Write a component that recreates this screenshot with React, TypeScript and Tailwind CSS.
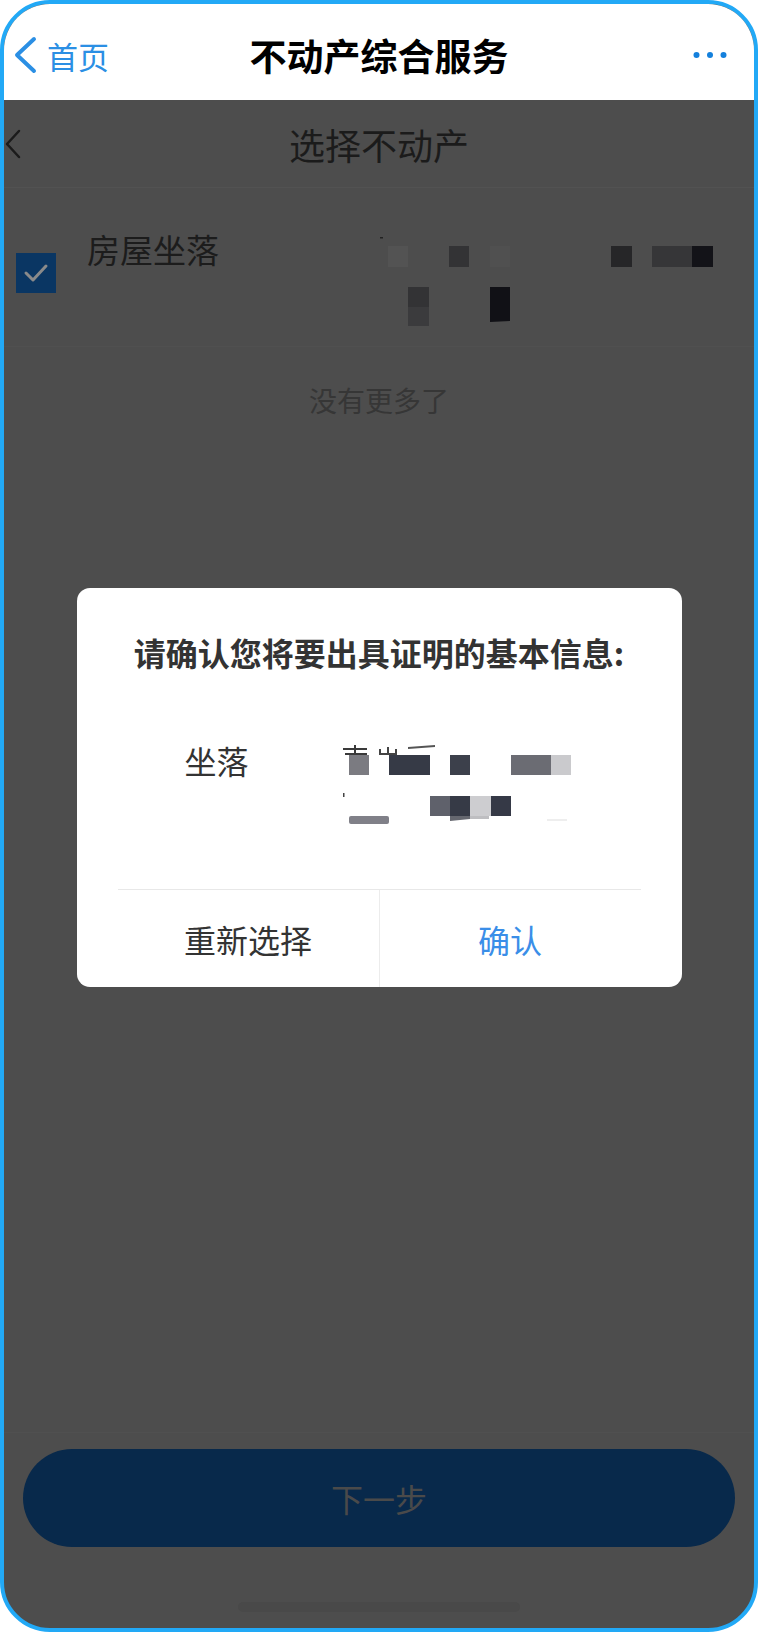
import React from "react";

const FONT = { fontFamily: '"Noto Sans CJK SC", "Noto Sans", sans-serif' };

function RowMosaic() {
  return (
    <svg width="336" height="92" viewBox="0 0 336 92" className="shrink-0">
      <rect x="0" y="2" width="3" height="1.5" fill="#222" />
      <rect x="8" y="11" width="20" height="21" fill="#535353" />
      <rect x="69" y="11" width="20" height="21" fill="#333335" />
      <rect x="110" y="11" width="20" height="21" fill="#505050" />
      <rect x="231" y="11" width="21" height="21" fill="#262628" />
      <rect x="272" y="11" width="40" height="21" fill="#363638" />
      <rect x="312" y="11" width="21" height="21" fill="#131318" />
      <rect x="28" y="52" width="21" height="20" fill="#333335" />
      <rect x="28" y="72" width="21" height="19" fill="#3b3b3d" />
      <path d="M110 52 H130 V86 L110 87 Z" fill="#111116" />
    </svg>
  );
}

function ValueMosaic() {
  return (
    <svg width="230" height="100" viewBox="0 0 230 100" className="shrink-0">
      <rect x="0" y="13" width="24" height="2" fill="#3a3a3a" />
      <rect x="2" y="18" width="22" height="2" fill="#3a3a3a" />
      <rect x="11" y="10" width="2" height="10" fill="#3a3a3a" />
      <rect x="36" y="14" width="2" height="6" fill="#444" />
      <rect x="44" y="12" width="2" height="8" fill="#444" />
      <rect x="52" y="14" width="2" height="6" fill="#444" />
      <rect x="36" y="18" width="18" height="2" fill="#444" />
      <path d="M65 12 L92 10 L92 12 L65 14 Z" fill="#555" />
      <rect x="6" y="20" width="20" height="20" fill="#7b7b81" />
      <rect x="46" y="20" width="41" height="20" fill="#363a46" />
      <rect x="107" y="20" width="20" height="20" fill="#3c404b" />
      <rect x="168" y="20" width="40" height="20" fill="#6b6c73" />
      <rect x="208" y="20" width="20" height="20" fill="#cacacd" />
      <rect x="0" y="58" width="1.5" height="4" fill="#444" />
      <rect x="87" y="61" width="20" height="20" fill="#5f616b" />
      <rect x="107" y="61" width="20" height="20" fill="#363a46" />
      <rect x="127" y="61" width="21" height="20" fill="#cdcdd0" />
      <rect x="148" y="61" width="20" height="20" fill="#353946" />
      <rect x="6" y="81" width="40" height="8" rx="2" fill="#808088" />
      <path d="M107 81 H127 V84 L107 86 Z" fill="#65676f" />
      <rect x="127" y="81" width="19" height="3" fill="#bebec1" />
      <rect x="204" y="84" width="20" height="2" fill="#eeeeee" />
    </svg>
  );
}

export default function App() {
  return (
    <div className="w-[758px] h-[1632px] bg-white" style={FONT}>
      <div className="relative h-full rounded-[50px] border-4 border-[#22a9f6] overflow-hidden flex flex-col bg-[#4d4d4d]">
        {/* Top nav */}
        <div className="h-[96px] shrink-0 bg-white grid grid-cols-[1fr_auto_1fr] items-center pt-[6px] px-[8px]">
          <div className="flex items-center">
            <svg width="26" height="38" viewBox="0 0 26 38">
              <path d="M22 3 L5 19 L22 35" fill="none" stroke="#2b8fe4" strokeWidth="4" strokeLinecap="round" strokeLinejoin="round" />
            </svg>
            <span className="ml-[9px] text-[31px] leading-none text-[#2b8fe4]">首页</span>
          </div>
          <div className="text-[37px] leading-none font-bold text-black">不动产综合服务</div>
          <div className="flex justify-end pr-[19px]">
            <svg width="34" height="8" viewBox="0 0 34 8">
              <circle cx="3.5" cy="4" r="3" fill="#1480dc" />
              <circle cx="17" cy="4" r="3" fill="#1480dc" />
              <circle cx="30.5" cy="4" r="3" fill="#1480dc" />
            </svg>
          </div>
        </div>

        {/* Sub header */}
        <div className="h-[88px] shrink-0 grid grid-cols-[1fr_auto_1fr] items-center border-b border-[#525252]">
          <div className="flex items-center">
            <svg width="18" height="30" viewBox="0 0 18 30">
              <path d="M15 2 L3 15 L15 28" fill="none" stroke="#1b1b1b" strokeWidth="2.5" strokeLinecap="round" strokeLinejoin="round" />
            </svg>
          </div>
          <div className="text-[36px] leading-none text-[#1b1b1b] pt-[1px]">选择不动产</div>
          <div />
        </div>

        {/* List row */}
        <div className="h-[159px] shrink-0 flex items-start pl-[12px] border-b border-[#505050]">
          <div className="mt-[65px] w-[40px] h-[40px] bg-[#0a3663] flex items-center justify-center shrink-0">
            <svg width="26" height="20" viewBox="0 0 26 20">
              <path d="M3 10 L10 17 L23 3" fill="none" stroke="#8a8a8a" strokeWidth="3" strokeLinecap="round" strokeLinejoin="round" />
            </svg>
          </div>
          <div className="ml-[31px] mt-[36px] text-[33px] leading-[50px] text-[#1c1c1c] shrink-0">房屋坐落</div>
          <div className="ml-[161px] mt-[47px]">
            <RowMosaic />
          </div>
        </div>

        <div className="mt-[32px] text-center text-[28px] leading-[42px] text-[#363636]">没有更多了</div>

        <div className="flex-1" />

        {/* Bottom bar */}
        <div className="shrink-0 border-t border-[#505050] pt-[16px] pb-[16px] flex flex-col items-center">
          <div className="self-stretch mx-[19px] h-[98px] rounded-full bg-[#08294b] flex items-center justify-center">
            <span className="text-[32px] leading-none text-[#4a4a4a]">下一步</span>
          </div>
          <div className="mt-[55px] w-[282px] h-[10px] rounded-full bg-[#494949]" />
        </div>

        {/* Modal layer */}
        <div className="absolute inset-0 flex justify-center items-start pt-[584px]">
          <div className="w-[605px] bg-white rounded-[13px] flex flex-col">
            <div className="pt-[46px] text-center text-[32px] leading-[37px] font-bold text-[#333333]">
              请确认您将要出具证明的基本信息:
            </div>
            <div className="mt-[64px] flex items-start pl-[108px]">
              <div className="w-[158px] text-[32px] leading-[50px] text-[#333333] shrink-0">坐落</div>
              <ValueMosaic />
            </div>
            <div className="mt-[54px] mx-[41px] h-px bg-[#e8e8e8]" />
            <div className="mx-[41px] h-[97px] flex">
              <div className="flex-1 flex items-center justify-center border-r border-[#ececec] text-[32px] leading-none text-[#333333]">
                重新选择
              </div>
              <div className="flex-1 flex items-center justify-center text-[32px] leading-none text-[#3a8ee8]">
                确认
              </div>
            </div>
          </div>
        </div>
      </div>
    </div>
  );
}
